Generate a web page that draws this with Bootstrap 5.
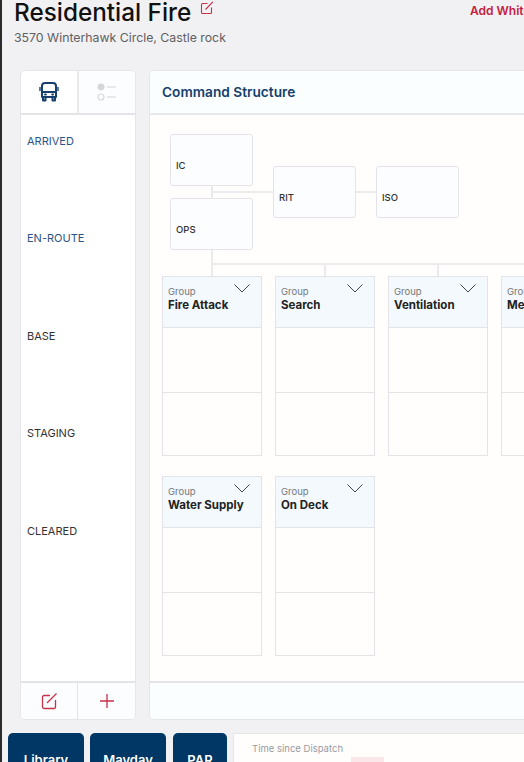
<!DOCTYPE html>
<html lang="en">
<head>
  <meta charset="UTF-8">
  <meta name="viewport" content="width=device-width, initial-scale=1.0">
  <title>Residential Fire</title>
  <link href="https://cdn.jsdelivr.net/npm/bootstrap@5.3.3/dist/css/bootstrap.min.css" rel="stylesheet">
  <style>
    html, body {
      height: 762px;
      overflow: hidden;
    }
    body {
      background-color: #f1f1f3;
      font-family: Inter, "Liberation Sans", sans-serif;
      color: #222;
    }
    .page-shell {
      width: 760px;
      height: 762px;
      border-left: 2px solid #2b2b2b;
    }
    .top-head {
      height: 70px;
      padding: 0 0 0 12px;
    }
    .top-head h1 {
      font-size: 24.3px;
      font-weight: 500;
      line-height: 30px;
      margin: -3px 0 0;
      color: #111;
    }
    .top-head p {
      font-size: 12.3px;
      line-height: 16px;
      margin: 3px 0 0;
      color: #5f6062;
    }
    .head-edit {
      margin: 0 0 12px 9px;
    }
    .add-link {
      position: absolute;
      left: 468px;
      top: 3px;
      font-size: 12px;
      line-height: 15px;
      font-weight: 600;
      color: #c5203e;
      text-decoration: none;
    }
    .work-row {
      height: 650px;
      padding-left: 18px;
      gap: 13px;
    }
    .side-panel, .main-panel {
      background: #fff;
      border: 1px solid #e6e6ea;
      border-radius: 5px;
      overflow: hidden;
    }
    .side-panel {
      width: 116px;
      flex: none;
    }
    .side-tabs {
      height: 44px;
      border-bottom: 2px solid #e4e4e8;
    }
    .side-tabs > div {
      flex: 1 1 0;
    }
    .tab-off {
      background: #fbfdfe;
      border-left: 2px solid #e9e9ec;
    }
    .status-list {
      flex: 1;
      padding-top: 14.5px;
    }
    .status-item {
      height: 97.5px;
      padding-left: 6px;
      font-size: 11px;
      line-height: 22px;
      color: #333;
    }
    .status-live {
      color: #2c5587;
    }
    .side-foot {
      height: 38px;
      background: #fbfdfe;
      border-top: 2px solid #e4e4e8;
    }
    .foot-edit {
      width: 56px;
      flex: none;
    }
    .foot-add {
      flex: 1;
      border-left: 1px solid #e4e4e8;
    }
    .main-panel {
      flex: 1;
    }
    .main-head {
      height: 44px;
      padding-left: 12px;
      background: #fbfeff;
      border-bottom: 2px solid #e8e8eb;
      font-size: 13.7px;
      font-weight: 600;
      color: #163f6b;
    }
    .main-body {
      flex: 1;
      position: relative;
      background: #fffefd;
      padding: 161px 0 0 12px;
    }
    .chart-node {
      position: absolute;
      width: 83px;
      height: 52px;
      padding: 24px 0 0 5px;
      background: #fcfdfe;
      border: 1px solid #e4e4e8;
      border-radius: 3px;
      font-size: 9.5px;
      line-height: 14px;
      font-weight: 500;
      color: #333;
    }
    .chart-line {
      position: absolute;
      background: #ebebed;
    }
    .group-grid {
      display: grid;
      grid-template-columns: repeat(4, 100px);
      column-gap: 13px;
      row-gap: 20px;
    }
    .group-box {
      height: 180px;
      border: 1px solid #e4e4e8;
      background: #fffefd;
    }
    .group-top {
      position: relative;
      height: 51px;
      padding: 9px 0 0 5px;
      background: #f3f9fd;
      border-bottom: 1px solid #e4e4e8;
    }
    .group-top small {
      display: block;
      font-size: 9.5px;
      line-height: 12px;
      color: #77787a;
    }
    .group-top strong {
      display: block;
      font-size: 11.5px;
      line-height: 15px;
      font-weight: 700;
      color: #222;
    }
    .group-top svg {
      position: absolute;
      right: 11px;
      top: 7px;
    }
    .group-slot {
      height: 64px;
    }
    .group-slot + .group-slot {
      border-top: 1px solid #e4e4e8;
    }
    .main-foot {
      height: 38px;
      background: #fbfeff;
      border-top: 2px solid #e4e4e8;
    }
    .bottom-bar {
      height: 42px;
      margin-top: 13px;
      padding-left: 6px;
      gap: 6px;
    }
    .bar-btn {
      height: 40px;
      padding: 13px 0 0;
      border: 0;
      border-radius: 5px 5px 0 0;
      background: #003764;
      color: #fff;
      font-size: 13px;
      line-height: 20px;
      font-weight: 600;
      text-align: center;
    }
    .time-card {
      flex: 1;
      position: relative;
      padding: 8px 0 0 18px;
      background: #fffefd;
      border-top: 1px solid #e6e6e8;
      border-left: 1px solid #e6e6e8;
      font-size: 9.5px;
      line-height: 14px;
      color: #9a9a9d;
    }
    .time-mark {
      position: absolute;
      left: 117px;
      top: 23px;
      width: 33px;
      height: 12px;
      background: #fbe6e9;
    }
  </style>
</head>
<body>
  <div class="page-shell position-relative">
    <div class="top-head">
      <div class="d-flex align-items-center">
        <h1>Residential Fire</h1>
        <svg class="head-edit" width="14" height="14" viewBox="0 0 14 14" fill="none" stroke="#c8314a" stroke-width="1.1"><path d="M7.5 2.5H2.5a1 1 0 0 0-1 1v8a1 1 0 0 0 1 1h8a1 1 0 0 0 1-1V6.5"/><path d="M5.5 8.5 12.8 0.8"/></svg>
      </div>
      <p>3570 Winterhawk Circle, Castle rock</p>
      <a class="add-link" href="#">Add White Board</a>
    </div>

    <div class="work-row d-flex">
      <div class="side-panel d-flex flex-column">
        <div class="side-tabs d-flex">
          <div class="d-flex align-items-center justify-content-center">
            <svg width="20" height="22" viewBox="0 0 20 22" fill="none" stroke="#173f6d" stroke-width="2" stroke-linejoin="round"><path d="M3 5c0-2 1.500-3 3-3h8c1.500 0 3 1 3 3v11H3z"/><path d="M3 11h14"/><path d="M1 6v4M19 6v4" stroke-width="1.400"/><path d="M4 16v3.500h2.500V16M13.500 16v3.500H16V16"/><path d="M6 13.500h.8M13.200 13.500h.8" stroke-linecap="round"/></svg>
          </div>
          <div class="tab-off d-flex align-items-center justify-content-center">
            <svg width="20" height="18" viewBox="0 0 20 18" fill="none" stroke="#d6d6d9" stroke-width="1.200"><circle cx="4" cy="4" r="3" fill="#d6d6d9"/><circle cx="4" cy="14" r="3"/><path d="M10 4h9M10 14h9"/></svg>
          </div>
        </div>
        <div class="status-list">
          <div class="status-item status-live">ARRIVED</div>
          <div class="status-item status-live">EN-ROUTE</div>
          <div class="status-item">BASE</div>
          <div class="status-item">STAGING</div>
          <div class="status-item">CLEARED</div>
        </div>
        <div class="side-foot d-flex">
          <div class="foot-edit d-flex align-items-center justify-content-center">
            <svg width="18" height="18" viewBox="0 0 18 18" fill="none" stroke="#c8314a" stroke-width="1.300"><path d="M10 3.500H4a1.500 1.500 0 0 0-1.500 1.500v10A1.500 1.500 0 0 0 4 16.500h10a1.500 1.500 0 0 0 1.500-1.500V8"/><path d="M7 11 16.500 1.500"/></svg>
          </div>
          <div class="foot-add d-flex align-items-center justify-content-center">
            <svg width="16" height="16" viewBox="0 0 16 16" fill="none" stroke="#c8314a" stroke-width="1.300"><path d="M8 1v14M1 8h14"/></svg>
          </div>
        </div>
      </div>

      <div class="main-panel d-flex flex-column">
        <div class="main-head d-flex align-items-center">Command Structure</div>
        <div class="main-body">
          <div class="chart-line" style="left:61px;top:70px;width:2px;height:14px"></div>
          <div class="chart-line" style="left:61px;top:76px;width:62px;height:2px"></div>
          <div class="chart-line" style="left:206px;top:76px;width:20px;height:2px"></div>
          <div class="chart-line" style="left:61px;top:135px;width:2px;height:26px"></div>
          <div class="chart-line" style="left:61px;top:148px;width:400px;height:2px"></div>
          <div class="chart-line" style="left:174px;top:148px;width:2px;height:13px"></div>
          <div class="chart-line" style="left:287px;top:148px;width:2px;height:13px"></div>
          <div class="chart-line" style="left:400px;top:148px;width:2px;height:13px"></div>
          <div class="chart-node" style="left:20px;top:19px">IC</div>
          <div class="chart-node" style="left:20px;top:83px">OPS</div>
          <div class="chart-node" style="left:123px;top:51px">RIT</div>
          <div class="chart-node" style="left:226px;top:51px">ISO</div>

          <div class="group-grid" id="groupGrid"></div>
        </div>
        <div class="main-foot"></div>
      </div>
    </div>

    <div class="bottom-bar d-flex">
      <button class="bar-btn" style="width:76px">Library</button>
      <button class="bar-btn" style="width:76px">Mayday</button>
      <button class="bar-btn" style="width:54px;margin-left:1px">PAR</button>
      <div class="time-card">Time since Dispatch<div class="time-mark"></div></div>
    </div>
  </div>

  <script src="https://cdn.jsdelivr.net/npm/bootstrap@5.3.3/dist/js/bootstrap.bundle.min.js"></script>
  <script>
    const groups = ["Fire Attack", "Search", "Ventilation", "Medical", "Water Supply", "On Deck"];
    document.getElementById("groupGrid").innerHTML = groups
      .map((name, i) => `
        <div class="group-box"${i === 4 ? ' style="grid-column:1"' : ""}>
          <div class="group-top">
            <small>Group</small>
            <strong>${name}</strong>
            <svg width="16" height="9" viewBox="0 0 16 9" fill="none" stroke="#444" stroke-width="1"><path d="M.5.5 8 8 15.500.5"/></svg>
          </div>
          <div class="group-slot"></div>
          <div class="group-slot"></div>
        </div>
      `)
      .join("");
  </script>
</body>
</html>
